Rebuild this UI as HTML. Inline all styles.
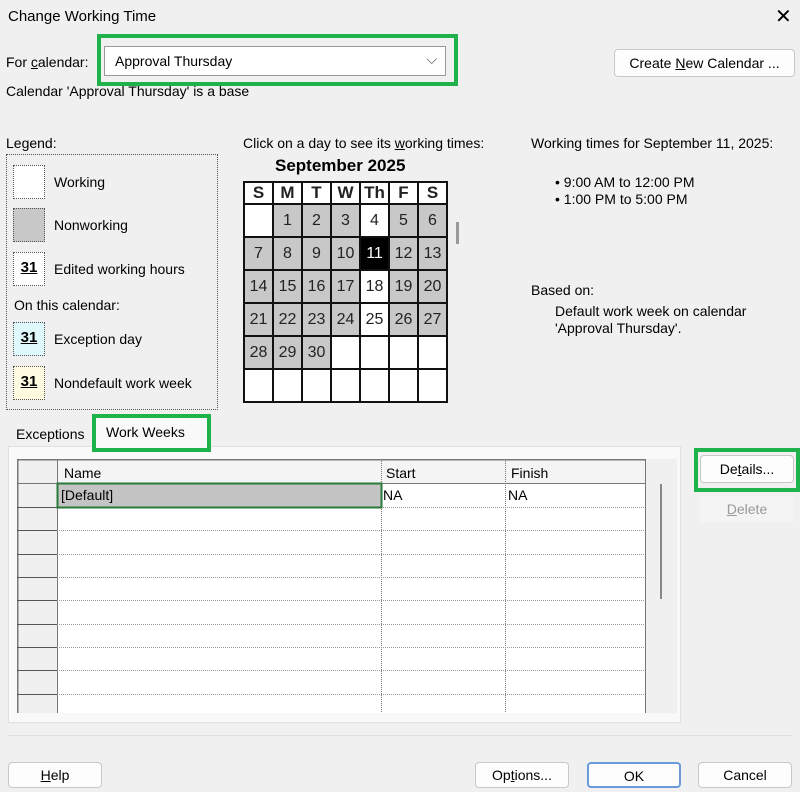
<!DOCTYPE html><html><head><style>
*{box-sizing:border-box}body{margin:0;width:800px;height:792px;background:#f0f0f0;font-family:"Liberation Sans",sans-serif;font-size:14px;color:#000;position:relative;overflow:hidden}
.a{position:absolute;white-space:nowrap}
.btn{position:absolute;background:#fdfdfd;border:1px solid #c8c8c8;border-radius:4px;text-align:center;font-size:14px}
.g{position:absolute;border:4px solid #1fb14a}
table.cal{position:absolute;left:243px;top:181px;border-collapse:collapse;font-size:16px}
table.cal td{border:2px solid #111;width:29px;height:33px;text-align:center;padding:0;color:#222}
table.cal tr.h td{height:22px;font-weight:bold;background:#fff;font-size:17px}
.n{background:#c8c8c8}.w{background:#fff}.k{background:#000;color:#fff!important}
.lg{position:absolute;left:13px;width:32px;height:34px;border:1px dotted #555;font-weight:bold;text-decoration:underline;text-align:center;line-height:30px;font-size:15px}
</style></head><body>
<div class="a" style="left:8px;top:8px;font-size:15px">Change Working Time</div>
<div class="a" style="left:775px;top:4px;font-size:20px">✕</div>
<div class="a" style="left:6px;top:54px">For <u>c</u>alendar:</div>
<div class="a" style="left:104px;top:46px;width:342px;height:30px;background:#fff;border:1px solid #999;padding:6px 10px">Approval Thursday<span style="position:absolute;right:8px;top:4px;color:#555">⌵</span></div>
<div class="g" style="left:97px;top:34px;width:361px;height:52px"></div>
<div class="btn" style="left:614px;top:49px;width:181px;height:28px;line-height:26px">Create <u>N</u>ew Calendar ...</div>
<div class="a" style="left:6px;top:83px">Calendar 'Approval Thursday' is a base</div>
<div class="a" style="left:6px;top:135px">Legend:</div>
<div class="a" style="left:6px;top:154px;width:212px;height:256px;border:1px dotted #555"></div>
<div class="lg" style="top:165px;background:#fff"></div><div class="a" style="left:54px;top:174px">Working</div>
<div class="lg" style="top:208px;background:#c8c8c8"></div><div class="a" style="left:54px;top:217px">Nonworking</div>
<div class="lg" style="top:252px;background:#fff">31</div><div class="a" style="left:54px;top:261px">Edited working hours</div>
<div class="a" style="left:14px;top:297px">On this calendar:</div>
<div class="lg" style="top:322px;background:#dff8fc">31</div><div class="a" style="left:54px;top:331px">Exception day</div>
<div class="lg" style="top:366px;background:#fefbe0">31</div><div class="a" style="left:54px;top:375px">Nondefault work week</div>
<div class="a" style="left:243px;top:135px">Click on a day to see its <u>w</u>orking times:</div>
<div class="a" style="left:275px;top:156px;font-weight:bold;font-size:17px">September 2025</div>
<table class="cal">
<tr class="h"><td>S</td><td>M</td><td>T</td><td>W</td><td>Th</td><td>F</td><td>S</td></tr>
<tr><td class="w"></td><td class="n">1</td><td class="n">2</td><td class="n">3</td><td class="w">4</td><td class="n">5</td><td class="n">6</td></tr>
<tr><td class="n">7</td><td class="n">8</td><td class="n">9</td><td class="n">10</td><td class="k">11</td><td class="n">12</td><td class="n">13</td></tr>
<tr><td class="n">14</td><td class="n">15</td><td class="n">16</td><td class="n">17</td><td class="w">18</td><td class="n">19</td><td class="n">20</td></tr>
<tr><td class="n">21</td><td class="n">22</td><td class="n">23</td><td class="n">24</td><td class="w">25</td><td class="n">26</td><td class="n">27</td></tr>
<tr><td class="n">28</td><td class="n">29</td><td class="n">30</td><td class="w"></td><td class="w"></td><td class="w"></td><td class="w"></td></tr>
<tr><td class="w"></td><td class="w"></td><td class="w"></td><td class="w"></td><td class="w"></td><td class="w"></td><td class="w"></td></tr>
</table>
<div class="a" style="left:456px;top:222px;width:3px;height:22px;background:#999"></div>
<div class="a" style="left:531px;top:135px">Working times for September 11, 2025:</div>
<div class="a" style="left:555px;top:174px">• 9:00 AM to 12:00 PM</div>
<div class="a" style="left:555px;top:191px">• 1:00 PM to 5:00 PM</div>
<div class="a" style="left:531px;top:282px">Based on:</div>
<div class="a" style="left:555px;top:303px">Default work week on calendar</div>
<div class="a" style="left:555px;top:320px">'Approval Thursday'.</div>
<div class="a" style="left:8px;top:446px;width:673px;height:277px;background:#f9f9f9;border:1px solid #e0e0e0"></div>
<div class="a" style="left:16px;top:426px">Exceptions</div>
<div class="a" style="left:96px;top:418px;width:112px;height:30px;background:#f9f9f9"></div>
<div class="a" style="left:106px;top:424px">Work Weeks</div>
<div class="g" style="left:92px;top:414px;width:119px;height:38px"></div>
<svg class="a" style="left:17px;top:459px" width="660" height="254">
<rect x="0" y="0" width="660" height="254" fill="#fff"/>
<rect x="0" y="0" width="40" height="254" fill="#f0f0f0"/>
<rect x="40" y="0" width="588" height="24" fill="#f4f4f4"/>
<rect x="628" y="0" width="32" height="254" fill="#f0f0f0"/>
<rect x="40" y="24" width="324" height="24" fill="#c4c4c4"/>
<g stroke="#777" stroke-width="1">
<line x1="0" y1="0.5" x2="628" y2="0.5" stroke-width="2"/>
<line x1="0.5" y1="0" x2="0.5" y2="254" stroke-width="2"/>
<line x1="40.5" y1="0" x2="40.5" y2="254"/>
<line x1="364.5" y1="0" x2="364.5" y2="254" stroke-dasharray="1 1"/>
<line x1="488.5" y1="0" x2="488.5" y2="254" stroke-dasharray="1 1"/>
<line x1="628.5" y1="0" x2="628.5" y2="254"/>
<line x1="0" y1="24.5" x2="628" y2="24.5"/>
</g>
<g stroke="#999" stroke-dasharray="1 1">
<line x1="40" y1="48.5" x2="628" y2="48.5"/><line x1="40" y1="71.5" x2="628" y2="71.5"/><line x1="40" y1="95.5" x2="628" y2="95.5"/><line x1="40" y1="118.5" x2="628" y2="118.5"/><line x1="40" y1="141.5" x2="628" y2="141.5"/><line x1="40" y1="165.5" x2="628" y2="165.5"/><line x1="40" y1="188.5" x2="628" y2="188.5"/><line x1="40" y1="211.5" x2="628" y2="211.5"/><line x1="40" y1="235.5" x2="628" y2="235.5"/>
</g>
<g stroke="#555"><line x1="0" y1="48.5" x2="40" y2="48.5"/><line x1="0" y1="71.5" x2="40" y2="71.5"/><line x1="0" y1="95.5" x2="40" y2="95.5"/><line x1="0" y1="118.5" x2="40" y2="118.5"/><line x1="0" y1="141.5" x2="40" y2="141.5"/><line x1="0" y1="165.5" x2="40" y2="165.5"/><line x1="0" y1="188.5" x2="40" y2="188.5"/><line x1="0" y1="211.5" x2="40" y2="211.5"/><line x1="0" y1="235.5" x2="40" y2="235.5"/></g>
<rect x="40.5" y="24.5" width="324" height="24" fill="none" stroke="#2a7a3a" stroke-width="2"/>
<line x1="644" y1="25" x2="644" y2="140" stroke="#888" stroke-width="2"/>
<g font-family="Liberation Sans" font-size="14"><text x="47" y="19">Name</text><text x="369" y="19">Start</text><text x="494" y="19">Finish</text><text x="44" y="41">[Default]</text><text x="366" y="41">NA</text><text x="491" y="41">NA</text></g>
</svg>
<div class="btn" style="left:700px;top:455px;width:94px;height:28px;line-height:26px">De<u>t</u>ails...</div>
<div class="g" style="left:694px;top:448px;width:106px;height:44px"></div>
<div class="a" style="left:700px;top:496px;width:94px;height:26px;background:#f4f4f4;color:#999;text-align:center;line-height:26px"><u>D</u>elete</div>
<div class="a" style="left:8px;top:735px;width:784px;height:1px;background:#ddd"></div>
<div class="btn" style="left:8px;top:762px;width:94px;height:26px;line-height:24px"><u>H</u>elp</div>
<div class="btn" style="left:475px;top:762px;width:94px;height:26px;line-height:24px">Op<u>t</u>ions...</div>
<div class="btn" style="left:587px;top:762px;width:94px;height:26px;line-height:24px;border:2px solid #6a9bd8">OK</div>
<div class="btn" style="left:698px;top:762px;width:94px;height:26px;line-height:24px">Cancel</div>
</body></html>
